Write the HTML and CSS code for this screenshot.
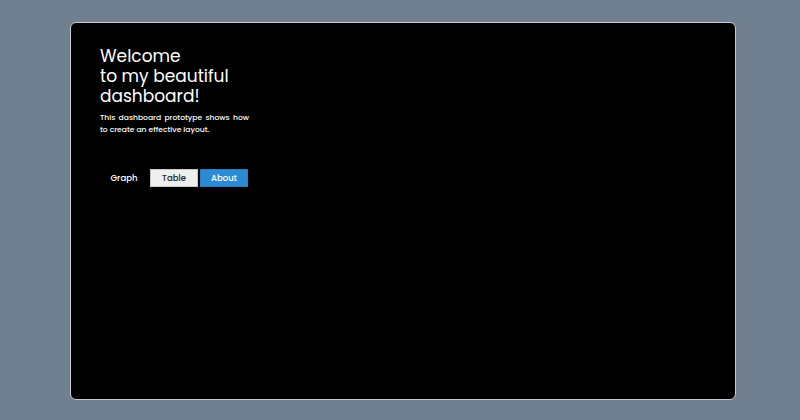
FILE: index.html
```html
<!DOCTYPE html>
<html>
<head>
<meta charset="utf-8">
<link rel="stylesheet" href="styles.css">
</head>
<body>
<div class="panel">
  <div class="intro">
    <h1 class="title">Welcome<br>to my beautiful<br>dashboard!</h1>
    <p class="desc">This dashboard prototype shows how to create an effective layout.</p>
  </div>
  <div class="tabs">
    <div class="tab tab-plain">Graph</div>
    <div class="tab tab-light">Table</div>
    <div class="tab tab-blue">About</div>
  </div>
</div>
</body>
</html>
```
FILE: styles.css
```css
html, body {
  margin: 0;
  padding: 0;
}
body {
  background: #708090;
  width: 800px;
  height: 420px;
  padding: 22px 0 0 70px;
  box-sizing: border-box;
  font-family: "Poppins", "Open Sans", sans-serif;
}
.panel {
  width: 666px;
  height: 378px;
  box-sizing: border-box;
  background: #000;
  border: 1px solid #c8ccd0;
  border-radius: 6px;
  padding: 23px 0 0 29px;
}
.intro {
  width: 149px;
}
.title {
  margin: 0;
  color: #fff;
  font-weight: 400;
  font-size: 17px;
  line-height: 20px;
}
.desc {
  margin: 6px 0 0 0;
  color: #fff;
  font-size: 7.6px;
  font-weight: 500;
  line-height: 12px;
  text-align: justify;
}
.tabs {
  display: flex;
  margin-top: 33px;
  gap: 2px;
}
.tab {
  width: 48px;
  height: 18px;
  box-sizing: border-box;
  font-size: 8.5px;
  font-weight: 500;
  display: flex;
  align-items: center;
  justify-content: center;
}
.tab-plain {
  color: #fff;
}
.tab-light {
  background: #eef0f0;
  border: 1px solid #c8c8c8;
  color: #222;
}
.tab-blue {
  background: #2d8bd4;
  border: 1px solid #2a7fc4;
  color: #fff;
}
```
